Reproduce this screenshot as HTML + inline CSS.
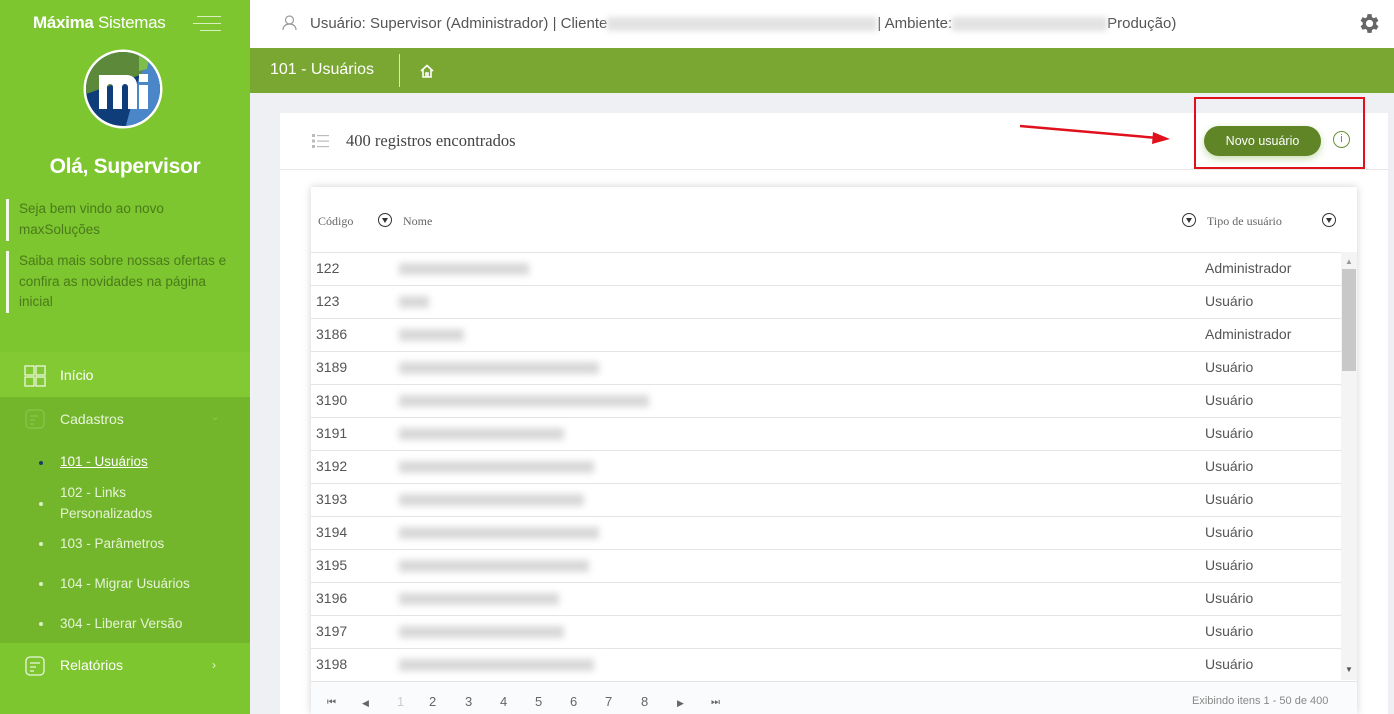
<!DOCTYPE html>
<html><head><meta charset="utf-8"><style>
*{margin:0;padding:0;box-sizing:border-box}
html{width:1394px;height:714px;overflow:hidden}
body{width:1394px;height:714px;overflow:hidden;background:#eef0f4;font-family:"Liberation Sans",sans-serif;position:relative}
.sb{position:absolute;left:0;top:0;width:250px;height:714px;background:#7dc62f;color:#fff}
.abs{position:absolute}
.note{position:absolute;left:6px;border-left:3px solid #f2f8ea;padding-left:10px;font-size:13.5px;line-height:20.5px;color:#4a7a1a}
.mi{position:absolute;left:0;width:250px;font-size:14px}
.sub{position:absolute;left:60px;font-size:13.5px;color:#e6f4d6;line-height:21px}
.dot{position:absolute;left:39px;width:4px;height:4px;border-radius:2px;background:#d8efc0}
.top{position:absolute;left:250px;top:0;width:1144px;height:48px;background:#fff;font-size:15px;color:#555}
.bar{position:absolute;left:250px;top:48px;width:1144px;height:45px;background:#7aa632;color:#fff}
.blur{display:inline-block;background:#e2e2e2;filter:blur(3px);vertical-align:middle}
.card{position:absolute;left:280px;top:113px;width:1108px;height:601px;background:#fff}
.tbl{position:absolute;left:311px;top:187px;width:1046px;height:527px;background:#fff;box-shadow:0 0 8px rgba(0,0,0,.18);overflow:hidden}
.row{position:absolute;left:0;width:1030px;height:33px;border-top:1px solid #e4e4e4;font-size:14px;color:#555}
.row span{position:absolute;top:7px}
.nm{position:absolute;left:81px;top:0;width:279px;height:33px;background:#fff}
.nm i{position:absolute;left:7px;top:10px;height:12px;background:#d8d8d8;filter:blur(3.5px)}
.th{position:absolute;top:27px;font-family:"Liberation Serif",serif;font-size:12px;color:#666}
.flt{position:absolute;top:26px;width:14px;height:14px;border:1.5px solid #333;border-radius:50%}
.flt:after{content:"";position:absolute;left:2.5px;top:3.5px;border-left:3.5px solid transparent;border-right:3.5px solid transparent;border-top:5px solid #333}
.pg{position:absolute;top:694px;font-size:13px;color:#666}
</style></head><body>
<div class="sb">
 <div class="abs" style="left:33px;top:13px;font-size:17px;letter-spacing:-0.3px"><b>Máxima</b> Sistemas</div>
 <div class="abs" style="left:197px;top:16px;width:24px;height:1px;background:#d8f0c0"></div>
 <div class="abs" style="left:193px;top:23px;width:28px;height:1px;background:#d8f0c0"></div>
 <div class="abs" style="left:200px;top:30px;width:21px;height:1px;background:#d8f0c0"></div>
 <svg class="abs" style="left:83px;top:49px" width="80" height="80" viewBox="0 0 80 80">
  <circle cx="40" cy="40" r="39.5" fill="#fff"/>
  <clipPath id="c"><circle cx="40" cy="40" r="37"/></clipPath>
  <g clip-path="url(#c)">
   <rect width="80" height="80" fill="#0f3d7a"/>
   <polygon points="0,0 80,0 80,18 0,46" fill="#5c8a3a"/>
   <polygon points="62,0 80,0 80,80 42,80 56,28 64,14" fill="#4a86c8"/>
   <polygon points="56,0 68,0 64,20 56,22" fill="#7dbf4a"/>
   <path d="M16 26h28a10 10 0 0 1 10 10v24h-9v-22a3 3 0 0 0-6 0v22h-9v-22a3 3 0 0 0-6 0v22h-8z" fill="#fff"/>
   <rect x="56" y="36" width="9" height="24" fill="#fff"/>
   <rect x="56" y="25" width="9" height="8" fill="#fff"/>
  </g>
 </svg>
 <div class="abs" style="left:0;width:250px;top:155px;text-align:center;font-size:21px;font-weight:bold;letter-spacing:-0.3px">Olá, Supervisor</div>
 <div class="note" style="top:199px;height:42px">Seja bem vindo ao novo<br>maxSoluções</div>
 <div class="note" style="top:251px;height:62px">Saiba mais sobre nossas ofertas e<br>confira as novidades na página<br>inicial</div>
 <div class="mi" style="top:352px;height:45px;background:#82c934"></div>
 <svg class="abs" style="left:24px;top:365px" width="22" height="22"><g fill="none" stroke="#eaf6dc" stroke-width="1.3"><rect x="1" y="1" width="9" height="9"/><rect x="12" y="1" width="9" height="9"/><rect x="1" y="12" width="9" height="9"/><rect x="12" y="12" width="9" height="9"/></g></svg>
 <div class="abs" style="left:60px;top:367px;font-size:14px">Início</div>
 <div class="mi" style="top:397px;height:246px;background:#73b62b"></div>
 <svg class="abs" style="left:24px;top:408px" width="22" height="22"><rect x="2" y="2" width="18" height="18" rx="4" fill="none" stroke="#86c64a" stroke-width="1.3"/><path d="M6 8h8M6 12h5M6 16h4" stroke="#86c64a" stroke-width="1.2"/></svg>
 <div class="abs" style="left:60px;top:411px;font-size:14px;color:#e8f5da">Cadastros</div>
 <div class="abs" style="left:211px;top:412px;font-size:10px;color:#8cc85a">⌄</div>
 <div class="dot" style="top:461px;background:#1a3d6a"></div><div class="sub" style="top:451px;color:#fff;text-decoration:underline">101 - Usuários</div>
 <div class="dot" style="top:502px"></div><div class="sub" style="top:482px">102 - Links<br>Personalizados</div>
 <div class="dot" style="top:542px"></div><div class="sub" style="top:533px">103 - Parâmetros</div>
 <div class="dot" style="top:582px"></div><div class="sub" style="top:573px">104 - Migrar Usuários</div>
 <div class="dot" style="top:622px"></div><div class="sub" style="top:613px">304 - Liberar Versão</div>
 <svg class="abs" style="left:24px;top:655px" width="22" height="22"><rect x="2" y="2" width="18" height="18" rx="4" fill="none" stroke="#eaf6dc" stroke-width="1.3"/><path d="M6 8h10M6 12h6M6 16h4" stroke="#eaf6dc" stroke-width="1.2"/></svg>
 <div class="abs" style="left:60px;top:657px;font-size:14px">Relatórios</div>
 <div class="abs" style="left:212px;top:658px;font-size:12px;color:#e8f5da">›</div>
</div>
<div class="top">
 <svg class="abs" style="left:32px;top:15px" width="15" height="16"><circle cx="7.5" cy="5" r="4" fill="none" stroke="#999" stroke-width="1.2"/><path d="M1 15c0-4 3-6 6.5-6s6.5 2 6.5 6" fill="none" stroke="#999" stroke-width="1.2"/></svg>
 <div class="abs" style="left:60px;top:15px;white-space:nowrap">Usuário: Supervisor (Administrador) | Cliente<span class="blur" style="width:270px;height:14px"></span>| Ambiente:<span class="blur" style="width:155px;height:14px"></span>Produção)</div>
 <svg class="abs" style="left:1106px;top:11px" width="25" height="25" viewBox="0 0 24 24"><path fill="#666" d="M19.4 13a7.5 7.5 0 0 0 0-2l2.1-1.6-2-3.5-2.5 1a7.4 7.4 0 0 0-1.7-1L15 3h-4l-.4 2.9a7.4 7.4 0 0 0-1.7 1l-2.5-1-2 3.5L6.5 11a7.5 7.5 0 0 0 0 2l-2.1 1.6 2 3.5 2.5-1a7.4 7.4 0 0 0 1.7 1L11 21h4l.4-2.9a7.4 7.4 0 0 0 1.7-1l2.5 1 2-3.5zM13 15.5a3.5 3.5 0 1 1 0-7 3.5 3.5 0 0 1 0 7z"/></svg>
</div>
<div class="bar">
 <div class="abs" style="left:20px;top:13px;font-size:16px">101 - Usuários</div>
 <div class="abs" style="left:149px;top:6px;width:1px;height:33px;background:#d9e9c0"></div>
 <svg class="abs" style="left:169px;top:15px" width="16" height="16"><path d="M2 8L8 2.5 14 8M4 6.5V14h8V6.5M7 14v-4h2v4" fill="none" stroke="#fff" stroke-width="1.6"/></svg>
</div>
<div class="card">
 <svg class="abs" style="left:32px;top:20px" width="18" height="16"><g fill="#bbb"><rect x="0" y="1" width="3" height="3"/><rect x="0" y="6.5" width="3" height="3"/><rect x="0" y="12" width="3" height="3"/><rect x="5" y="2" width="12" height="1.2"/><rect x="5" y="7.5" width="12" height="1.2"/><rect x="5" y="13" width="12" height="1.2"/></g></svg>
 <div class="abs" style="left:66px;top:18px;font-family:'Liberation Serif',serif;font-size:16.5px;color:#444">400 registros encontrados</div>
 <div class="abs" style="left:0;top:56px;width:1108px;height:1px;background:#e8e8e8"></div>
 <div class="abs" style="left:924px;top:13px;width:117px;height:30px;border-radius:15px;background:#5f8527;color:#fff;font-size:12.5px;text-align:center;line-height:30px;box-shadow:0 3px 8px rgba(120,170,60,.4)">Novo usuário</div>
 <div class="abs" style="left:1053px;top:18px;width:17px;height:17px;border:1.3px solid #6b8f35;border-radius:50%;color:#6b8f35;font-size:11px;text-align:center;line-height:15px">i</div>
</div>
<div class="abs" style="left:1194px;top:97px;width:171px;height:72px;border:2.5px solid #e0101c"></div>
<svg class="abs" style="left:1018px;top:122px" width="155" height="24"><line x1="2" y1="4" x2="140" y2="16" stroke="#e0101c" stroke-width="2.5"/><polygon points="152,17 135,10 134,22" fill="#e0101c"/></svg>
<div class="tbl">
 <div class="th" style="left:7px">Código</div><div class="flt" style="left:67px"></div>
 <div class="th" style="left:92px">Nome</div>
 <div class="flt" style="left:871px"></div><div class="th" style="left:896px">Tipo de usuário</div><div class="flt" style="left:1011px"></div>
 <div class="abs" style="left:1030px;top:65px;width:16px;height:428px;background:#f4f4f4"></div>
 <div class="abs" style="left:1031px;top:82px;width:14px;height:102px;background:#c8c8c8"></div>
 <div class="abs" style="left:1034px;top:70px;font-size:8px;color:#999">▲</div>
 <div class="abs" style="left:1034px;top:478px;font-size:8px;color:#555">▼</div>
 <div class="row" style="top:65px"><span style="left:5px">122</span><div class="nm"><i style="width:130px"></i></div><span style="left:894px">Administrador</span></div>
 <div class="row" style="top:98px"><span style="left:5px">123</span><div class="nm"><i style="width:30px"></i></div><span style="left:894px">Usuário</span></div>
 <div class="row" style="top:131px"><span style="left:5px">3186</span><div class="nm"><i style="width:65px"></i></div><span style="left:894px">Administrador</span></div>
 <div class="row" style="top:164px"><span style="left:5px">3189</span><div class="nm"><i style="width:200px"></i></div><span style="left:894px">Usuário</span></div>
 <div class="row" style="top:197px"><span style="left:5px">3190</span><div class="nm"><i style="width:250px"></i></div><span style="left:894px">Usuário</span></div>
 <div class="row" style="top:230px"><span style="left:5px">3191</span><div class="nm"><i style="width:165px"></i></div><span style="left:894px">Usuário</span></div>
 <div class="row" style="top:263px"><span style="left:5px">3192</span><div class="nm"><i style="width:195px"></i></div><span style="left:894px">Usuário</span></div>
 <div class="row" style="top:296px"><span style="left:5px">3193</span><div class="nm"><i style="width:185px"></i></div><span style="left:894px">Usuário</span></div>
 <div class="row" style="top:329px"><span style="left:5px">3194</span><div class="nm"><i style="width:200px"></i></div><span style="left:894px">Usuário</span></div>
 <div class="row" style="top:362px"><span style="left:5px">3195</span><div class="nm"><i style="width:190px"></i></div><span style="left:894px">Usuário</span></div>
 <div class="row" style="top:395px"><span style="left:5px">3196</span><div class="nm"><i style="width:160px"></i></div><span style="left:894px">Usuário</span></div>
 <div class="row" style="top:428px"><span style="left:5px">3197</span><div class="nm"><i style="width:165px"></i></div><span style="left:894px">Usuário</span></div>
 <div class="row" style="top:461px"><span style="left:5px">3198</span><div class="nm"><i style="width:195px"></i></div><span style="left:894px">Usuário</span></div>
 <div class="abs" style="left:0;top:494px;width:1046px;height:46px;background:#fafbfc;border-top:1px solid #e4e4e4"></div>
</div>
<div class="pg" style="left:327px;font-size:10px;top:697px">⏮</div>
<div class="pg" style="left:362px;font-size:9px;top:698px">◀</div>
<div class="pg" style="left:397px;color:#ccc">1</div>
<div class="pg" style="left:429px">2</div><div class="pg" style="left:465px">3</div><div class="pg" style="left:500px">4</div><div class="pg" style="left:535px">5</div><div class="pg" style="left:570px">6</div><div class="pg" style="left:605px">7</div><div class="pg" style="left:641px">8</div>
<div class="pg" style="left:677px;font-size:9px;top:698px">▶</div>
<div class="pg" style="left:711px;font-size:10px;top:697px">⏭</div>
<div class="pg" style="left:1192px;font-size:11px;top:695px;color:#888">Exibindo itens 1 - 50 de 400</div>
</body></html>
